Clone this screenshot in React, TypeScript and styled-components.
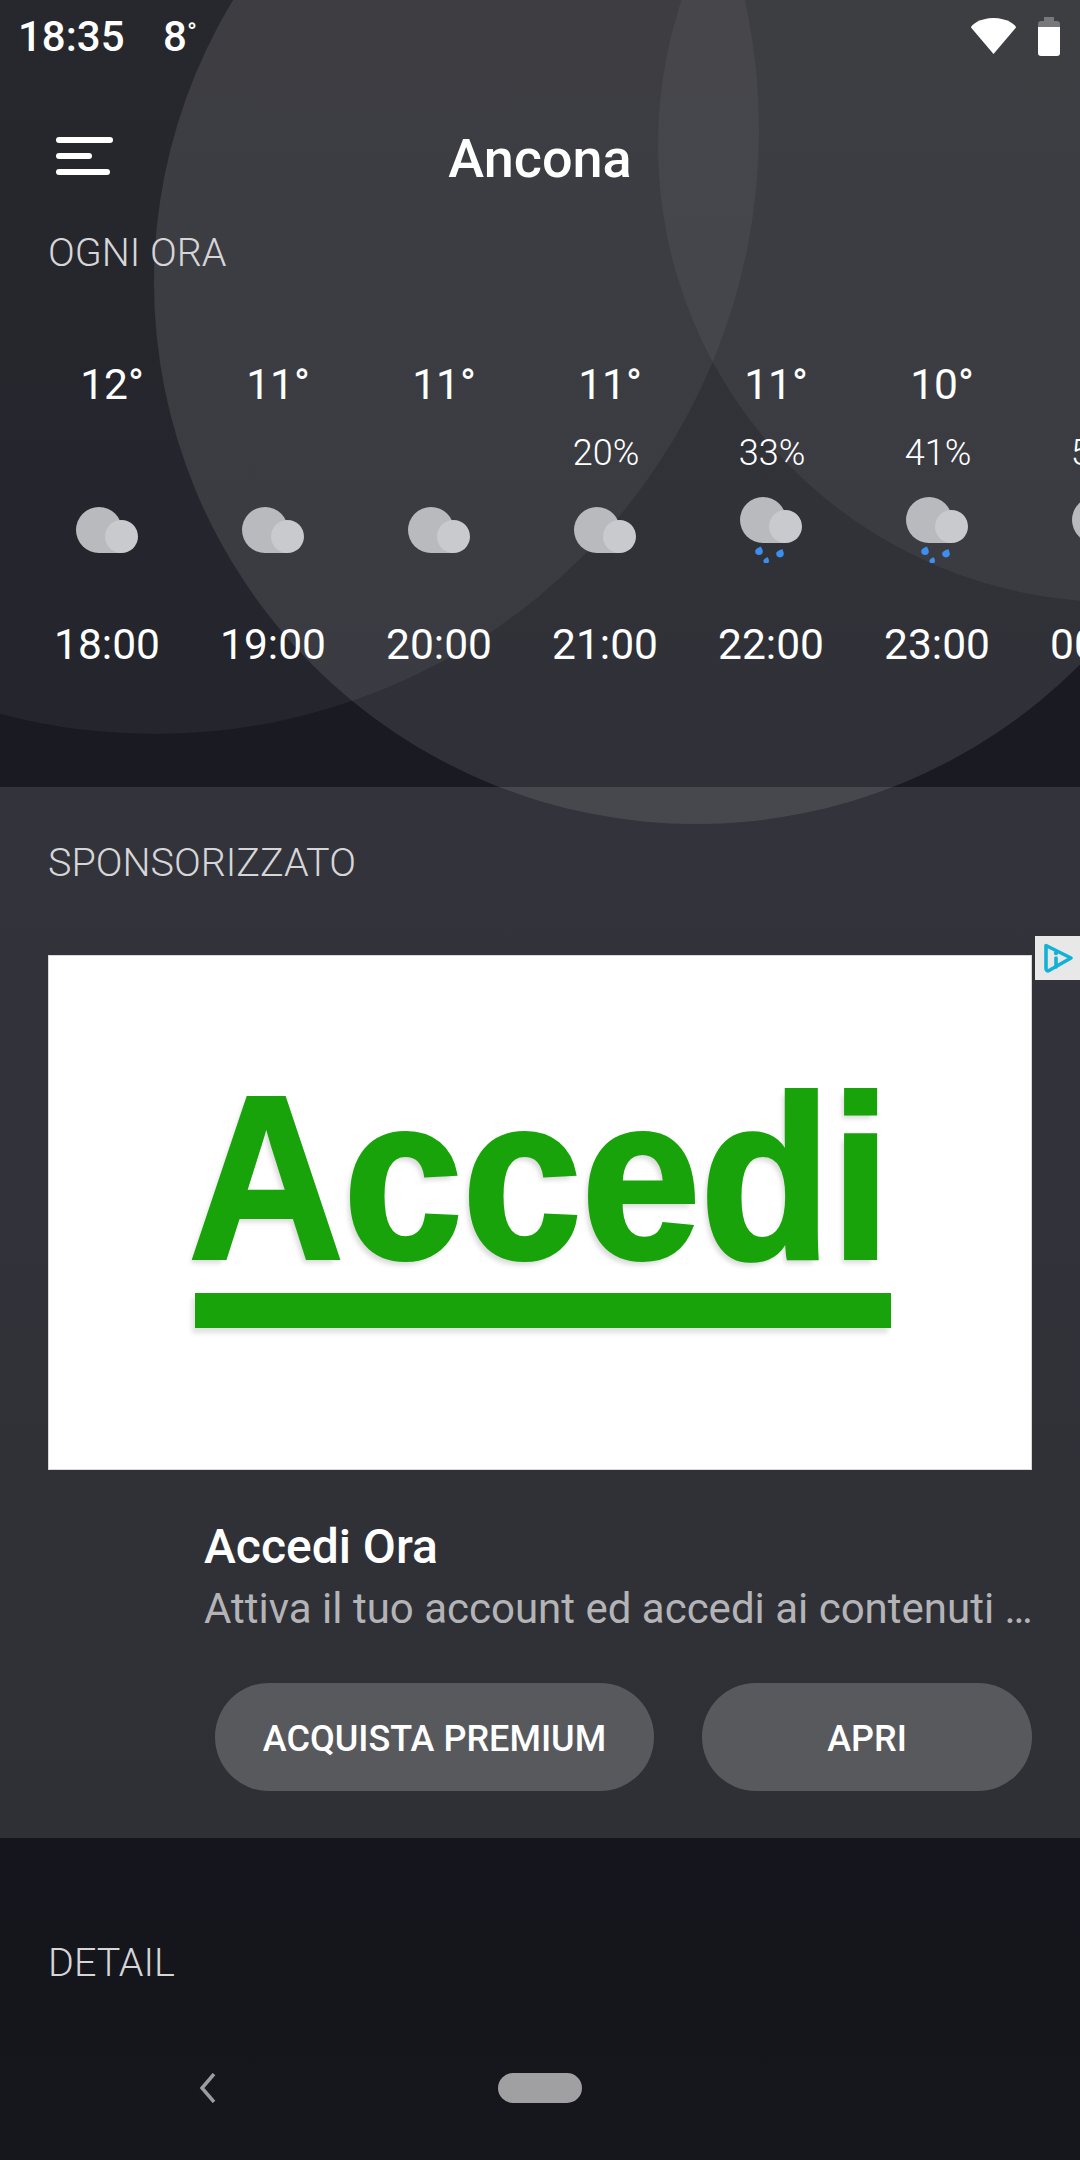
import styled, { createGlobalStyle } from "styled-components";

const hours = [
  { temp: "12°", rain: "", time: "18:00" },
  { temp: "11°", rain: "", time: "19:00" },
  { temp: "11°", rain: "", time: "20:00" },
  { temp: "11°", rain: "20%", time: "21:00" },
  { temp: "11°", rain: "33%", time: "22:00", drops: true },
  { temp: "10°", rain: "41%", time: "23:00", drops: true },
  { temp: "9°", rain: "50%", time: "00:00", drops: true },
];

function CloudIcon({ drops }: { drops?: boolean }) {
  return (
    <CloudSvg $drops={drops} width="62" height="66" viewBox="0 0 62 66">
      <path
        d="M23 0a23 23 0 0 1 23 23v23H23a23 23 0 0 1 0-46z"
        fill="#b9babd"
      />
      <circle cx="45.5" cy="29.5" r="16.5" fill="#c9cacd" />
      {drops && (
        <g fill="#3d8fef">
          <path d="M21 49.500c.3 1.600 1.800 3 1.800 4.800a3.800 3.800 0 1 1-7.600 0c0-2.200 3.200-3.800 5.800-4.800z" />
          <path d="M42.500 52c.3 1.600 1.300 2.900 1.300 4.600a3.800 3.800 0 1 1-7.600 0c0-2.200 3.800-3.600 6.300-4.600z" />
          <path d="M27.800 60.200c.2 1 1.200 2.100 1.200 3.500a2.800 2.800 0 1 1-5.600 0c0-1.600 2.400-2.800 4.400-3.500z" />
        </g>
      )}
    </CloudSvg>
  );
}

function AdChoicesIcon() {
  return (
    <svg width="32" height="34" viewBox="0 0 32 34" fill="none">
      <path
        d="M4 4.500 29 17 7 29.500a2 2 0 0 1-3-2z"
        stroke="#12b2d6"
        strokeWidth="3.600"
        strokeLinejoin="round"
      />
      <path d="M14 17v9" stroke="#12b2d6" strokeWidth="3.600" strokeLinecap="round" />
      <circle cx="14" cy="12" r="2.200" fill="#12b2d6" />
    </svg>
  );
}

function App() {
  return (
    <Page>
      <GlobalStyle />
      <Circle $size={1208} $x={-449} $y={-474} $alpha={0.05} />
      <Circle $size={1084} $x={154} $y={-260} $alpha={0.1} />
      <Circle $size={914} $x={658} $y={-312} $alpha={0.05} />

      <Header>
        <StatusBar>
          <Clock>18:35</Clock>
          <StatusTemp>
            8<Degree>°</Degree>
          </StatusTemp>
          <StatusIcons>
            <svg width="47" height="36" viewBox="0 0 47 36">
              <path
                d="M23.500 36 1 9.500C1 7 10 0 23.500 0S46 7 46 9.500z"
                fill="#fff"
              />
            </svg>
            <svg width="22" height="39" viewBox="0 0 22 39">
              <path d="M6 0h10v4h3a3 3 0 0 1 3 3v4H0V7a3 3 0 0 1 3-3h3z" fill="#77787b" />
              <path
                d="M0 10h22v26a3 3 0 0 1-3 3H3a3 3 0 0 1-3-3z"
                fill="#fff"
              />
            </svg>
          </StatusIcons>
        </StatusBar>

        <Toolbar>
          <MenuButton>
            <MenuBar $width={57} />
            <MenuBar $width={36} />
            <MenuBar $width={54} />
          </MenuButton>
          <CityName>Ancona</CityName>
        </Toolbar>

        <SectionLabel>OGNI ORA</SectionLabel>

        <HourRow>
          {hours.map((hour) => (
            <HourColumn key={hour.time}>
              <Temp>{hour.temp}</Temp>
              <RainChance>{hour.rain}</RainChance>
              <CloudIcon drops={hour.drops} />
              <HourTime>{hour.time}</HourTime>
            </HourColumn>
          ))}
        </HourRow>
      </Header>

      <SponsoredPanel>
        <SectionLabel>SPONSORIZZATO</SectionLabel>
        <AdChoices>
          <AdChoicesIcon />
        </AdChoices>
        <AdImage>
          <AdWord>Accedi</AdWord>
          <AdUnderline />
        </AdImage>
        <AdText>
          <AdTitle>Accedi Ora</AdTitle>
          <AdDescription>
            Attiva il tuo account ed accedi ai contenuti …
          </AdDescription>
        </AdText>
        <AdActions>
          <PillButton $width={439}>ACQUISTA PREMIUM</PillButton>
          <PillButton $width={330}>APRI</PillButton>
        </AdActions>
      </SponsoredPanel>

      <DetailSection>
        <SectionLabel>DETAIL</SectionLabel>
      </DetailSection>

      <NavBar>
        <svg width="18" height="30" viewBox="0 0 18 30" fill="none">
          <path d="M16 1 4 15l12 14" stroke="#9c9c9e" strokeWidth="3.500" />
        </svg>
        <HomePill />
      </NavBar>
    </Page>
  );
}

const GlobalStyle = createGlobalStyle`
  html, body {
    margin: 0;
    padding: 0;
    background: #16171e;
  }

  * {
    box-sizing: border-box;
  }
`;

const Page = styled.div`
  position: relative;
  width: 1080px;
  height: 2160px;
  overflow: hidden;
  background: linear-gradient(180deg, #1c1d22 0px, #191a22 780px, #15161d 1840px, #16171c 2160px);
  color: #fff;
  font-family: Roboto, "Liberation Sans", sans-serif;
`;

const Circle = styled.div<{ $size: number; $x: number; $y: number; $alpha: number }>`
  position: absolute;
  left: ${({ $x }) => $x}px;
  top: ${({ $y }) => $y}px;
  width: ${({ $size }) => $size}px;
  height: ${({ $size }) => $size}px;
  border-radius: 50%;
  background: rgba(255, 255, 255, ${({ $alpha }) => $alpha});
`;

const Header = styled.header`
  position: relative;
  height: 787px;
  overflow: hidden;
`;

const StatusBar = styled.div`
  display: flex;
  align-items: center;
  height: 72px;
  padding: 0 20px 0 18px;
  font-size: 42px;
  font-weight: 500;
`;

const Clock = styled.span`
  width: 145px;
`;

const StatusTemp = styled.span`
  display: flex;
`;

const Degree = styled.span`
  font-size: 26px;
  line-height: 40px;
`;

const StatusIcons = styled.div`
  display: flex;
  align-items: center;
  gap: 21px;
  margin-left: auto;
`;

const Toolbar = styled.div`
  position: relative;
  display: flex;
  align-items: center;
  justify-content: center;
  height: 168px;
`;

const MenuButton = styled.div`
  position: absolute;
  left: 56px;
  top: 65px;
  display: flex;
  flex-direction: column;
  gap: 10px;
`;

const MenuBar = styled.span<{ $width: number }>`
  display: block;
  width: ${({ $width }) => $width}px;
  height: 6px;
  border-radius: 3px;
  background: #fff;
`;

const CityName = styled.h1`
  margin: 4px 0 0;
  font-size: 54px;
  font-weight: 500;
`;

const SectionLabel = styled.h2`
  margin: 0 0 0 48px;
  font-size: 39.500px;
  line-height: 26px;
  font-weight: 300;
  color: #d6d6d8;
`;

const HourRow = styled.div`
  display: flex;
  margin-top: 93px;
  padding-left: 24px;
`;

const HourColumn = styled.div`
  flex: 0 0 166px;
  display: flex;
  flex-direction: column;
  align-items: center;
`;

const Temp = styled.div`
  height: 52px;
  padding-left: 10px;
  font-size: 42.500px;
  line-height: 52px;
  font-weight: 400;
`;

const RainChance = styled.div`
  height: 44px;
  margin-top: 20px;
  padding-left: 2px;
  font-size: 36px;
  line-height: 44px;
  font-weight: 300;
`;

const CloudSvg = styled.svg<{ $drops?: boolean }>`
  display: block;
  margin-top: ${({ $drops }) => ($drops ? 22 : 32)}px;
  margin-bottom: ${({ $drops }) => ($drops ? 0 : -10)}px;
`;

const HourTime = styled.div`
  height: 50px;
  margin-top: 57px;
  font-size: 42.500px;
  line-height: 50px;
`;

const SponsoredPanel = styled.section`
  position: relative;
  height: 1051px;
  padding-top: 63px;
  background: rgba(255, 255, 255, 0.115);
`;

const AdChoices = styled.div`
  position: absolute;
  right: 0;
  top: 149px;
  display: flex;
  align-items: center;
  justify-content: center;
  width: 45px;
  height: 44px;
  background: #e8e8e8;
`;

const AdImage = styled.div`
  display: flex;
  flex-direction: column;
  width: 984px;
  height: 515px;
  margin: 79px 0 0 48px;
  padding: 109px 0 0 146px;
  background: #fff;
  border: 1px solid #d8d8d8;
`;

const AdWord = styled.div`
  height: 228px;
  margin-left: -6px;
  font-family: "Liberation Sans", Arial, sans-serif;
  font-size: 232px;
  line-height: 225px;
  font-weight: 700;
  white-space: nowrap;
  color: #19a30a;
  -webkit-text-stroke: 4px #19a30a;
  text-shadow: -4px 5px 5px rgba(0, 0, 0, 0.15);
  transform: scaleX(0.922);
  transform-origin: left center;
`;

const AdUnderline = styled.div`
  width: 696px;
  height: 35px;
  background: #19a30a;
  box-shadow: -3px 5px 5px rgba(0, 0, 0, 0.12);
`;

const AdText = styled.div`
  margin: 49px 48px 0 204px;
`;

const AdTitle = styled.div`
  font-size: 48px;
  line-height: 56px;
  font-weight: 500;
`;

const AdDescription = styled.div`
  margin-top: 9px;
  font-size: 42px;
  line-height: 50px;
  color: #b4b4b7;
  white-space: nowrap;
  overflow: hidden;
`;

const AdActions = styled.div`
  display: flex;
  justify-content: flex-end;
  gap: 48px;
  margin: 49px 48px 0 0;
`;

const PillButton = styled.button<{ $width: number }>`
  width: ${({ $width }) => $width}px;
  height: 108px;
  padding: 3px 0 0;
  border: 0;
  border-radius: 54px;
  background: #58595d;
  color: #fff;
  font-family: inherit;
  font-size: 36px;
  font-weight: 500;
`;

const DetailSection = styled.section`
  position: relative;
  padding-top: 112px;
`;

const NavBar = styled.nav`
  position: relative;
  display: flex;
  align-items: center;
  gap: 282px;
  margin-top: 97px;
  padding-left: 198px;
`;

const HomePill = styled.div`
  width: 84px;
  height: 30px;
  border-radius: 15px;
  background: #a0a0a2;
`;

export default App;
